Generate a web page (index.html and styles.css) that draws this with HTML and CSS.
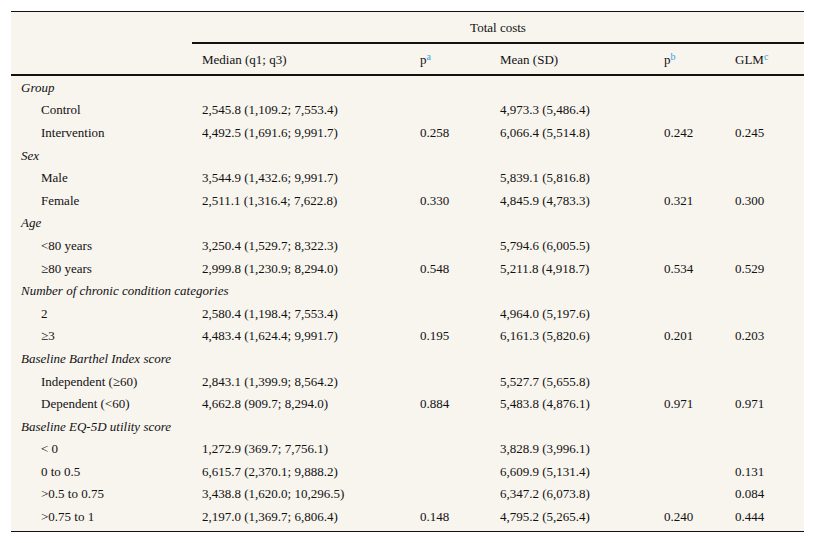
FILE: index.html
```html
<!DOCTYPE html>
<html>
<head>
<meta charset="utf-8">
<link rel="stylesheet" href="styles.css">
</head>
<body>
<div class="costs" role="table">
  <div class="th blank"></div>
  <div class="th span"><span>Total costs</span></div>

  <div class="th h2"></div>
  <div class="th h2"><span>Median (q1; q3)</span></div>
  <div class="th h2"><span>p<sup>a</sup></span></div>
  <div class="th h2"><span>Mean (SD)</span></div>
  <div class="th h2"><span>p<sup>b</sup></span></div>
  <div class="th h2"><span>GLM<sup>c</sup></span></div>

  <div class="td grp">Group</div>
  <div class="td sub">Control</div><div class="td">2,545.8 (1,109.2; 7,553.4)</div><div class="td"></div><div class="td">4,973.3 (5,486.4)</div><div class="td"></div><div class="td"></div>
  <div class="td sub">Intervention</div><div class="td">4,492.5 (1,691.6; 9,991.7)</div><div class="td">0.258</div><div class="td">6,066.4 (5,514.8)</div><div class="td">0.242</div><div class="td">0.245</div>

  <div class="td grp">Sex</div>
  <div class="td sub">Male</div><div class="td">3,544.9 (1,432.6; 9,991.7)</div><div class="td"></div><div class="td">5,839.1 (5,816.8)</div><div class="td"></div><div class="td"></div>
  <div class="td sub">Female</div><div class="td">2,511.1 (1,316.4; 7,622.8)</div><div class="td">0.330</div><div class="td">4,845.9 (4,783.3)</div><div class="td">0.321</div><div class="td">0.300</div>

  <div class="td grp">Age</div>
  <div class="td sub">&lt;80 years</div><div class="td">3,250.4 (1,529.7; 8,322.3)</div><div class="td"></div><div class="td">5,794.6 (6,005.5)</div><div class="td"></div><div class="td"></div>
  <div class="td sub">≥80 years</div><div class="td">2,999.8 (1,230.9; 8,294.0)</div><div class="td">0.548</div><div class="td">5,211.8 (4,918.7)</div><div class="td">0.534</div><div class="td">0.529</div>

  <div class="td grp">Number of chronic condition categories</div>
  <div class="td sub">2</div><div class="td">2,580.4 (1,198.4; 7,553.4)</div><div class="td"></div><div class="td">4,964.0 (5,197.6)</div><div class="td"></div><div class="td"></div>
  <div class="td sub">≥3</div><div class="td">4,483.4 (1,624.4; 9,991.7)</div><div class="td">0.195</div><div class="td">6,161.3 (5,820.6)</div><div class="td">0.201</div><div class="td">0.203</div>

  <div class="td grp">Baseline Barthel Index score</div>
  <div class="td sub">Independent (≥60)</div><div class="td">2,843.1 (1,399.9; 8,564.2)</div><div class="td"></div><div class="td">5,527.7 (5,655.8)</div><div class="td"></div><div class="td"></div>
  <div class="td sub">Dependent (&lt;60)</div><div class="td">4,662.8 (909.7; 8,294.0)</div><div class="td">0.884</div><div class="td">5,483.8 (4,876.1)</div><div class="td">0.971</div><div class="td">0.971</div>

  <div class="td grp">Baseline EQ-5D utility score</div>
  <div class="td sub">&lt; 0</div><div class="td">1,272.9 (369.7; 7,756.1)</div><div class="td"></div><div class="td">3,828.9 (3,996.1)</div><div class="td"></div><div class="td"></div>
  <div class="td sub">0 to 0.5</div><div class="td">6,615.7 (2,370.1; 9,888.2)</div><div class="td"></div><div class="td">6,609.9 (5,131.4)</div><div class="td"></div><div class="td">0.131</div>
  <div class="td sub">&gt;0.5 to 0.75</div><div class="td">3,438.8 (1,620.0; 10,296.5)</div><div class="td"></div><div class="td">6,347.2 (6,073.8)</div><div class="td"></div><div class="td">0.084</div>
  <div class="td sub">&gt;0.75 to 1</div><div class="td">2,197.0 (1,369.7; 6,806.4)</div><div class="td">0.148</div><div class="td">4,795.2 (5,265.4)</div><div class="td">0.240</div><div class="td">0.444</div>
</div>
</body>
</html>
```

FILE: styles.css
```css
html, body {
  margin: 0;
  padding: 0;
  background: #ffffff;
}

body {
  box-sizing: border-box;
  min-height: 543px;
  padding: 11px 11px 11px 11px;
  font-family: "Liberation Serif", "Times New Roman", serif;
  font-size: 13px;
  color: #111111;
}

.costs {
  display: grid;
  grid-template-columns: 181px 218px 80px 164px 71px 79px;
  grid-template-rows: 32px 32px;
  grid-auto-rows: 22.6px;
  width: 793px;
  box-sizing: border-box;
  padding-bottom: 3px;
  background: #f8f5ef;
  border-top: 1px solid #111111;
  border-bottom: 1px solid #111111;
}

.th {
  display: flex;
  align-items: center;
  box-sizing: border-box;
  padding: 0 10px;
  line-height: 15px;
  white-space: nowrap;
}

.span {
  grid-column: 2 / span 5;
  justify-content: center;
  border-bottom: 2px solid #111111;
}

.h2 {
  border-bottom: 2px solid #111111;
}

.th sup {
  font-size: 10px;
  line-height: 10px;
  color: #3b9fd8;
  vertical-align: 4px;
}

.td {
  display: flex;
  align-items: center;
  padding: 0 10px;
  line-height: 15px;
  white-space: nowrap;
}

.td.sub {
  padding-left: 30px;
}

.td.grp {
  grid-column: 1 / -1;
  font-style: italic;
}
```
